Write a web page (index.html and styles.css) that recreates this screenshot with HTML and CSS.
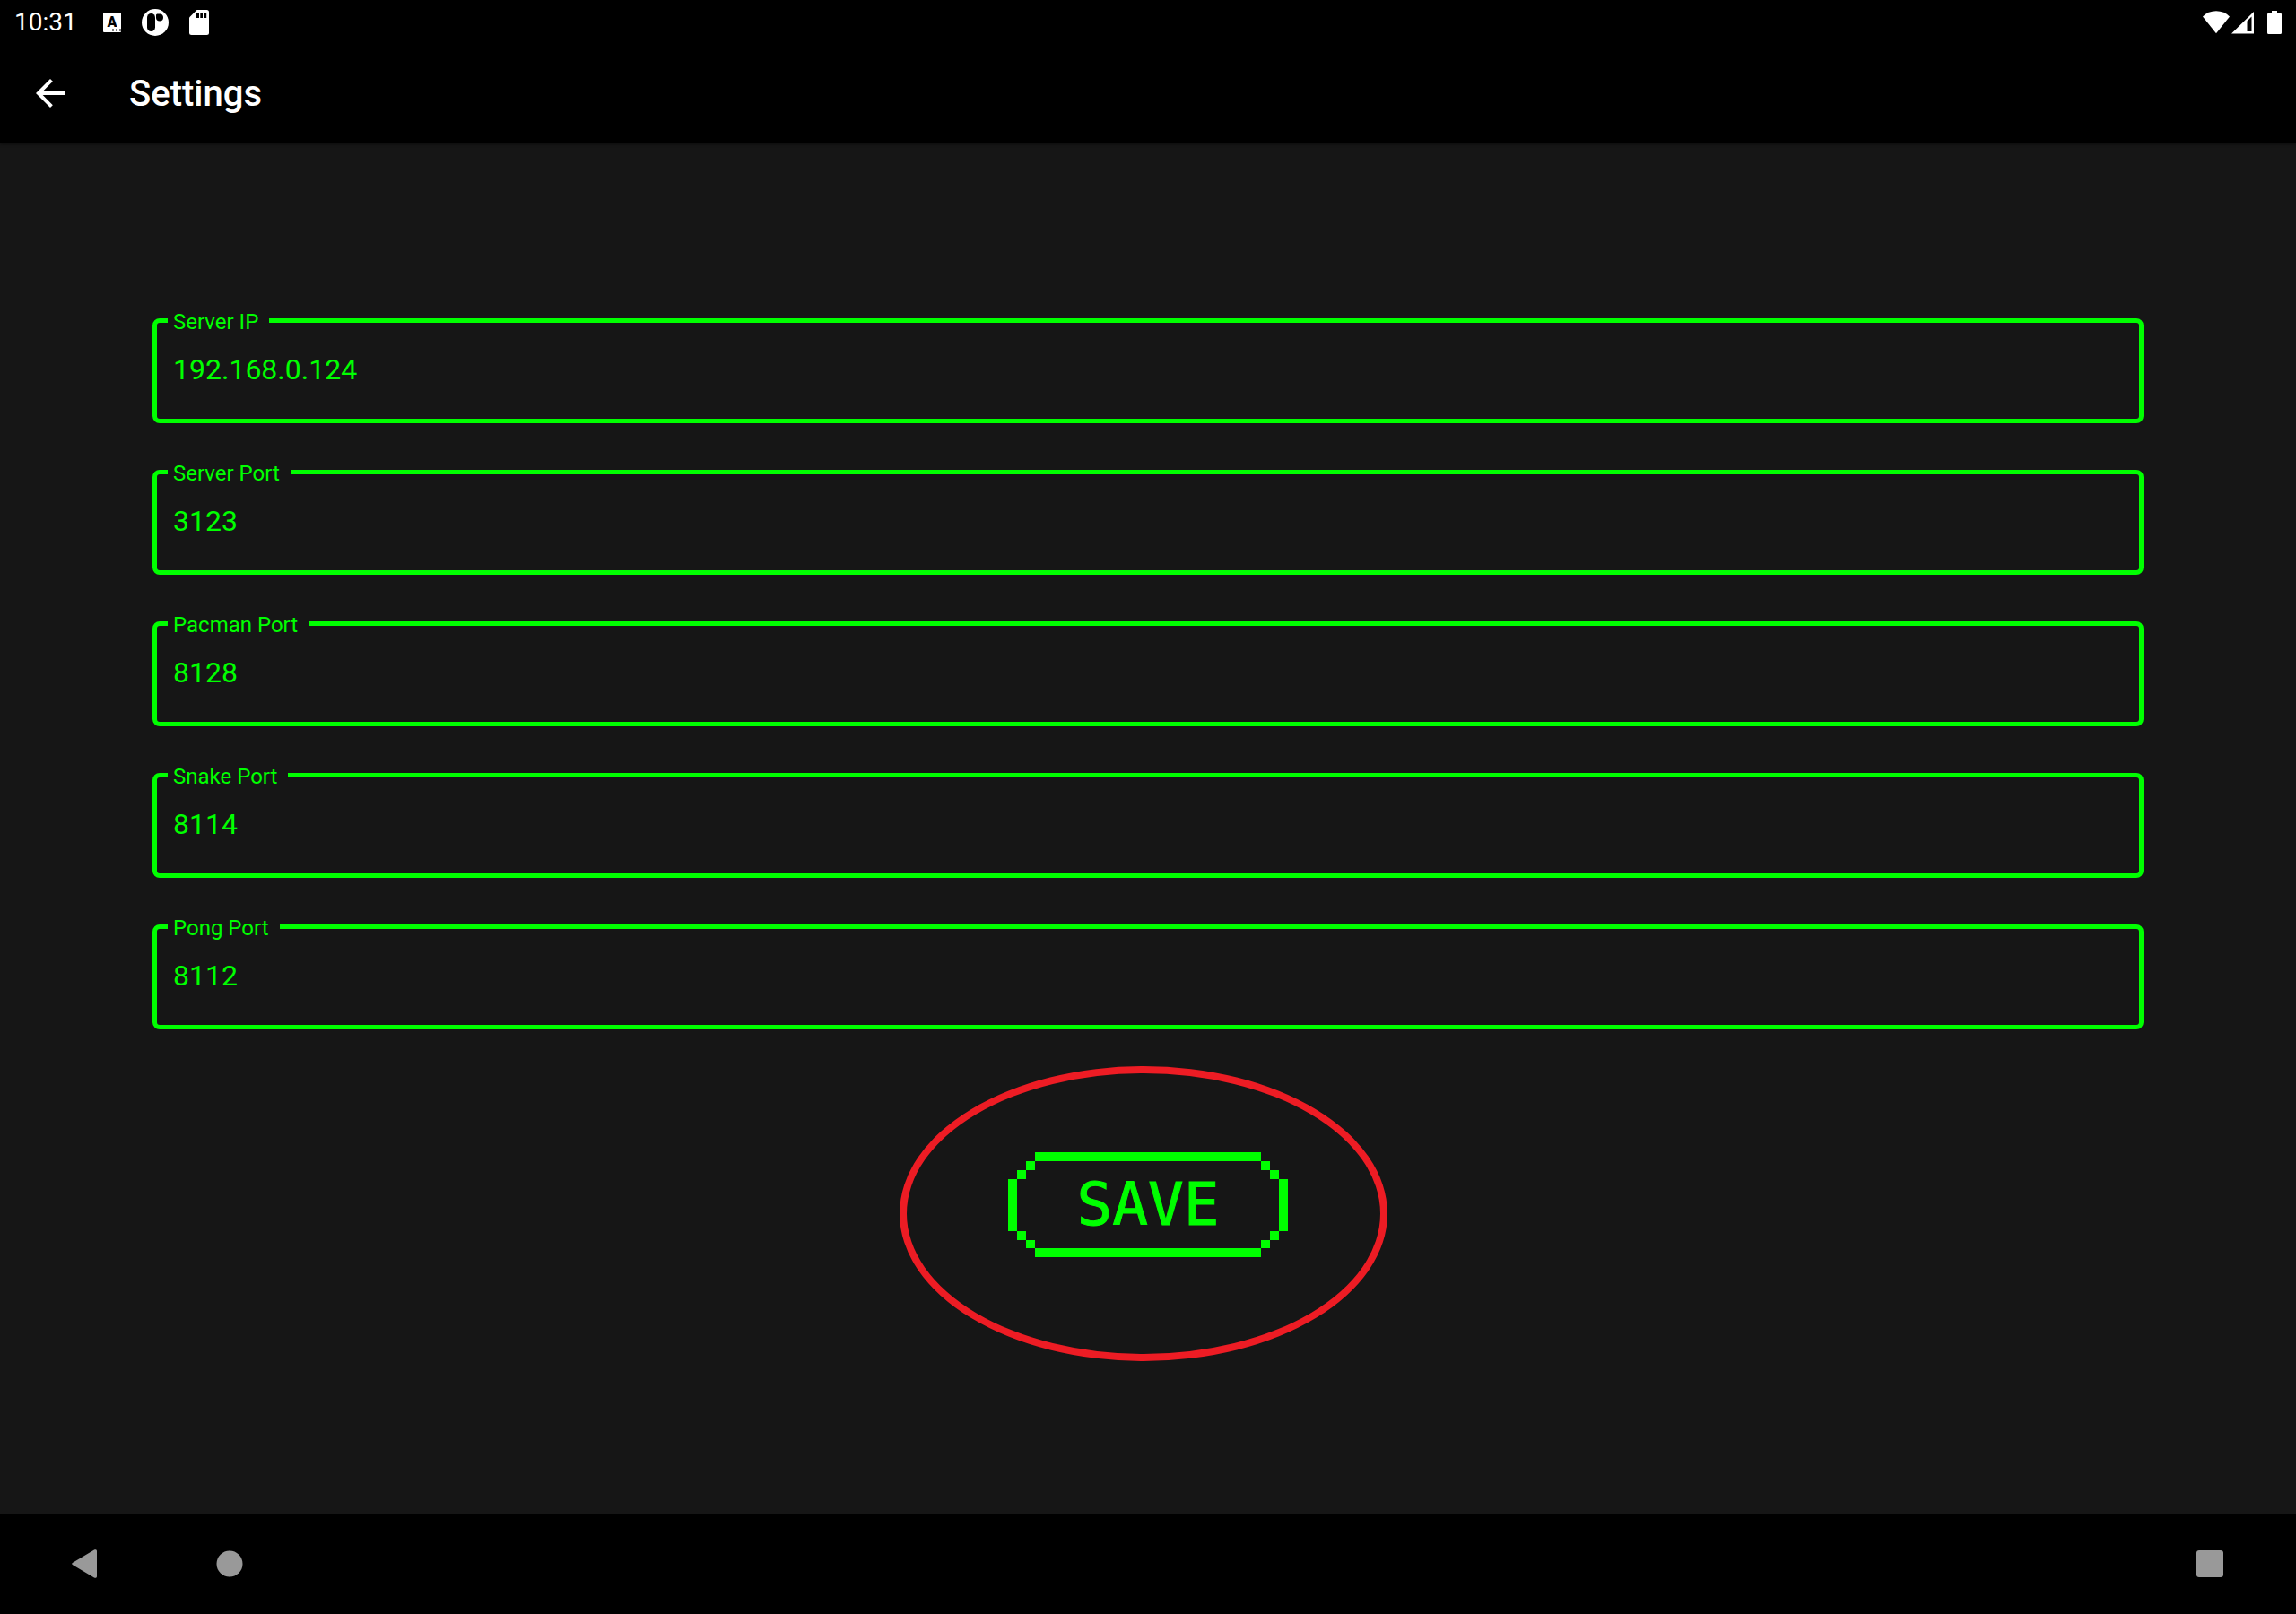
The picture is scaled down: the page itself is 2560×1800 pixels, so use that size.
FILE: index.html
```html
<!DOCTYPE html>
<html lang="en">
<head>
<meta charset="utf-8">
<meta name="viewport" content="width=device-width, initial-scale=1">
<title>Settings</title>
<link rel="stylesheet" href="styles.css">
</head>
<body>
<div class="status-bar">
  <time class="clock">10:31</time>
  <div class="notifications">
    <svg width="20" height="22" viewBox="0 0 20 22" aria-hidden="true">
      <rect width="20" height="22" rx="1" fill="#fff"/>
      <text class="badge-letter" x="10" y="16" text-anchor="middle">A</text>
      <path d="M10 18.500h2v2h-2zM14 18.500h2v2h-2zM18 18.500h2v2h-2z" fill="#000"/>
    </svg>
    <svg width="30" height="30" viewBox="0 0 30 30" aria-hidden="true">
      <circle cx="15" cy="15" r="15" fill="#fff"/>
      <rect x="6" y="5" width="9" height="20" rx="4.500" fill="#000"/>
      <path d="M17 5.500h4c2 .5 3 2 3 4a4 4 0 0 1-8 0v-3z" fill="#000"/>
    </svg>
    <svg width="22" height="28" viewBox="0 0 22 28" aria-hidden="true">
      <path d="M8.500 0H19.500A2.500 2.500 0 0 1 22 2.500V25.500A2.500 2.500 0 0 1 19.500 28H2.500A2.500 2.500 0 0 1 0 25.500V8.500z" fill="#fff"/>
      <path d="M8 3h3v6H8zM12.300 3h2.700v6h-2.700zM16.500 3h2.700v6h-2.700z" fill="#000"/>
    </svg>
  </div>
  <div class="system-icons">
    <svg width="30" height="26" viewBox="0 0 30 26" aria-hidden="true">
      <path d="M0 6.500C4 2.500 9 .3 15 .3S26 2.500 30 6.500L15 25.300z" fill="#fff"/>
    </svg>
    <svg class="signal" width="26" height="26" viewBox="0 0 26 26" aria-hidden="true">
      <path fill-rule="evenodd" d="M0 25.500L25 1v24.500zM17.500 11.500V23H22.500V6.500z" fill="#fff"/>
    </svg>
    <svg width="16" height="26" viewBox="0 0 16 26" aria-hidden="true">
      <path d="M5 0h6v2.500h3.500A1.500 1.500 0 0 1 16 4v20.500A1.500 1.500 0 0 1 14.500 26h-13A1.500 1.500 0 0 1 0 24.500V4a1.500 1.500 0 0 1 1.500-1.500H5z" fill="#fff"/>
    </svg>
  </div>
</div>
<header class="app-bar">
  <button class="icon-button" type="button" aria-label="Back">
    <svg width="48" height="48" viewBox="0 0 24 24" aria-hidden="true">
      <path d="M20 11H7.830l5.590-5.590L12 4l-8 8 8 8 1.410-1.410L7.830 13H20v-2z" fill="#fff"/>
    </svg>
  </button>
  <h1 class="title">Settings</h1>
</header>
<main class="content">
  <form class="settings">
    <fieldset class="field">
      <legend class="field-legend"><label for="server-ip">Server IP</label></legend>
      <input class="field-input" id="server-ip" type="text" value="192.168.0.124">
    </fieldset>
    <fieldset class="field">
      <legend class="field-legend"><label for="server-port">Server Port</label></legend>
      <input class="field-input" id="server-port" type="text" value="3123">
    </fieldset>
    <fieldset class="field">
      <legend class="field-legend"><label for="pacman-port">Pacman Port</label></legend>
      <input class="field-input" id="pacman-port" type="text" value="8128">
    </fieldset>
    <fieldset class="field">
      <legend class="field-legend"><label for="snake-port">Snake Port</label></legend>
      <input class="field-input" id="snake-port" type="text" value="8114">
    </fieldset>
    <fieldset class="field">
      <legend class="field-legend"><label for="pong-port">Pong Port</label></legend>
      <input class="field-input" id="pong-port" type="text" value="8112">
    </fieldset>
    <div class="save-area">
      <button class="save" type="submit">
        <svg class="save-frame" width="312" height="117" viewBox="0 0 312 117" aria-hidden="true">
          <path fill="#0f0" d="M30 0h252v10H30zM30 107h252v10H30zM0 30h10v58H0zM302 30h10v58h-10zM20 10h10v10H20zM10 20h10v10H10zM282 10h10v10h-10zM292 20h10v10h-10zM10 88h10v10H10zM20 98h10v9H20zM292 88h10v10h-10zM282 98h10v9h-10z"/>
        </svg>
        <span class="save-text">SAVE</span>
      </button>
      <span class="highlight"></span>
    </div>
  </form>
</main>
<nav class="nav-bar" aria-label="System navigation">
  <button class="nav-button" type="button" aria-label="Back">
    <svg width="32" height="32" viewBox="0 0 32 32" aria-hidden="true">
      <path d="M1.500 14.600L25 .6C26.500-.2 28 .2 28 2V30C28 31.800 26.500 32.200 25 31.400L1.500 17.400C-.3 16.400-.3 15.600 1.500 14.600z" fill="#999"/>
    </svg>
  </button>
  <button class="nav-button" type="button" aria-label="Home">
    <svg width="32" height="32" viewBox="0 0 32 32" aria-hidden="true">
      <circle cx="16" cy="16" r="14.500" fill="#999"/>
    </svg>
  </button>
  <button class="nav-button nav-recent" type="button" aria-label="Recent apps">
    <svg width="32" height="32" viewBox="0 0 32 32" aria-hidden="true">
      <rect x="1" y="1" width="30" height="30" rx="3" fill="#999"/>
    </svg>
  </button>
</nav>
</body>
</html>
```
FILE: styles.css
```css
* {
  box-sizing: border-box;
}

body {
  margin: 0;
  min-height: 100vh;
  display: flex;
  flex-direction: column;
  background: #161616;
  color: #fff;
  font-family: Roboto, "Liberation Sans", sans-serif;
}

button {
  margin: 0;
  padding: 0;
  border: 0;
  background: none;
  color: inherit;
  cursor: pointer;
}

svg {
  display: block;
}

.status-bar {
  display: flex;
  align-items: center;
  height: 48px;
  padding: 2px 16px 0;
  background: #000;
}

.clock {
  font-size: 28px;
  line-height: 32px;
}

.notifications {
  display: flex;
  align-items: center;
  gap: 23px;
  margin-left: 29px;
}

.badge-letter {
  font-size: 16px;
  font-weight: 900;
}

.system-icons {
  display: flex;
  align-items: center;
  gap: 14px;
  margin-left: auto;
}

.signal {
  margin-left: -12px;
}

.app-bar {
  display: flex;
  align-items: center;
  height: 112px;
  background: #000;
  box-shadow: 0 1px 3px rgba(0, 0, 0, 0.5);
}

.icon-button {
  width: 112px;
  height: 112px;
  display: grid;
  place-items: center;
}

.title {
  margin: 0 0 0 32px;
  padding-top: 2px;
  font-size: 40px;
  line-height: 48px;
  font-weight: 500;
}

.content {
  flex: 1;
  padding: 182px 170px 0;
}

.settings {
  display: flex;
  flex-direction: column;
  gap: 39px;
  color: #0f0;
}

.field {
  min-width: 0;
  margin: 0;
  padding: 0 12px 16px;
  border: 5px solid #0f0;
  border-radius: 8px;
}

.field-legend {
  padding: 3px 12px 0 6px;
  font-size: 24px;
  line-height: 28px;
}

.field-input {
  display: block;
  width: 100%;
  height: 78px;
  margin: 0;
  padding: 0 6px;
  border: 0;
  outline: 0;
  background: transparent;
  color: inherit;
  font: inherit;
  font-size: 32px;
}

.save-area {
  position: relative;
  align-self: center;
  margin-top: 98px;
}

.save {
  display: grid;
  place-items: center;
}

.save-frame,
.save-text {
  grid-area: 1 / 1;
}

.save-frame {
  shape-rendering: crispEdges;
}

.save-text {
  font-family: "DejaVu Sans Mono", monospace;
  font-size: 66px;
  line-height: 80px;
  -webkit-text-stroke: 1px #0f0;
}

/* Ellipse drawn round the save button */
.highlight {
  position: absolute;
  top: -96px;
  left: -121px;
  width: 544px;
  height: 329px;
  border: 8px solid #ed1c24;
  border-radius: 50%;
  pointer-events: none;
}

.nav-bar {
  display: flex;
  height: 112px;
  padding: 0 16px;
  background: #000;
}

.nav-button {
  width: 160px;
  display: grid;
  place-items: center;
}

.nav-recent {
  margin-left: auto;
}
```
